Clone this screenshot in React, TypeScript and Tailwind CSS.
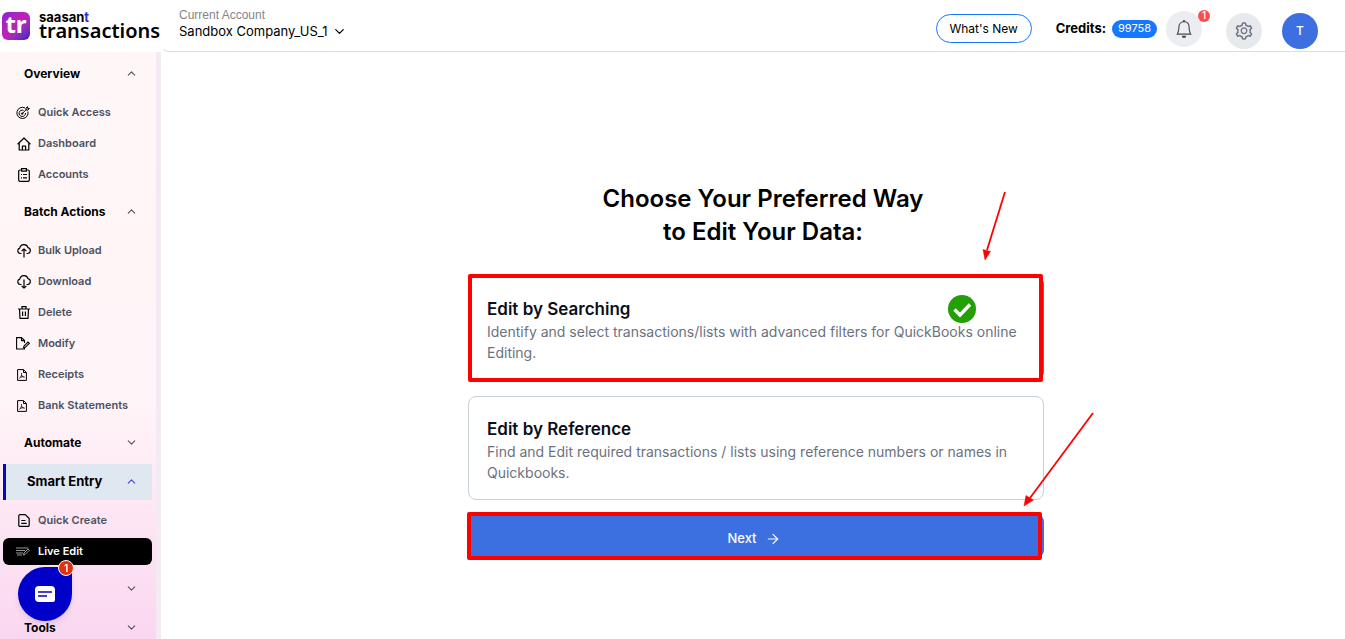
import { useState } from "react";
import type { ReactNode } from "react";
import clsx from "clsx";
import { ArrowRight, ChevronDown, ChevronUp } from "lucide-react";
import { AiOutlineSetting } from "react-icons/ai";
import { BsBell } from "react-icons/bs";

type Item = { label: string; icon: ReactNode };
type Section = { id: string; label: string; open?: boolean; current?: boolean; items?: Item[] };

const SECTIONS: Section[] = [
  {
    id: "overview",
    label: "Overview",
    open: true,
    items: [
      { label: "Quick Access", icon: <TargetIcon /> },
      { label: "Dashboard", icon: <HomeIcon /> },
      { label: "Accounts", icon: <ClipboardIcon /> },
    ],
  },
  {
    id: "batch",
    label: "Batch Actions",
    open: true,
    items: [
      { label: "Bulk Upload", icon: <CloudIcon arrow="M7 14.500V6M4.600 8.200 7 5.800 9.400 8.200" /> },
      { label: "Download", icon: <CloudIcon arrow="M7 5.500V14M4.600 11.800 7 14.200 9.400 11.800" /> },
      { label: "Delete", icon: <TrashIcon /> },
      { label: "Modify", icon: <ModifyIcon /> },
      { label: "Receipts", icon: <PdfIcon /> },
      { label: "Bank Statements", icon: <PdfIcon /> },
    ],
  },
  { id: "automate", label: "Automate" },
  {
    id: "smart",
    label: "Smart Entry",
    open: true,
    current: true,
    items: [
      { label: "Quick Create", icon: <DocumentIcon /> },
      { label: "Live Edit", icon: <LiveEditIcon /> },
    ],
  },
  { id: "more", label: "" },
  { id: "tools", label: "Tools" },
];

export default function App() {
  return (
    <div className="flex h-screen overflow-hidden bg-white font-['Inter','Liberation_Sans',sans-serif] text-black">
      <Sidebar />
      <div className="flex min-w-0 flex-1 flex-col">
        <Header />
        <EditChooser />
      </div>
      <ChatLauncher />
    </div>
  );
}

function Logo() {
  return (
    <a href="#" className="flex h-[52px] shrink-0 items-center gap-[9px] pl-0.5">
      <span className="flex size-7 shrink-0 items-center justify-center rounded-md bg-linear-to-br from-[#8a1fd0] via-[#c41fb4] to-[#3a12c8] pb-1 font-['Noto_Sans',sans-serif] text-2xl leading-6 font-bold text-white">
        tr
      </span>
      <span className="flex flex-col pb-0.5">
        <span className="text-[13px] leading-3 font-bold">
          saasan<span className="text-[#2b2be0]">t</span>
        </span>
        <span className="font-['Noto_Sans',sans-serif] text-xl leading-4 font-semibold">transactions</span>
      </span>
    </a>
  );
}

function Sidebar() {
  const [active, setActive] = useState("Live Edit");

  return (
    <aside className="flex w-[161px] shrink-0 flex-col">
      <Logo />
      <nav className="min-h-0 flex-1 overflow-hidden border-r-5 border-[#f4eaf3] bg-linear-to-b from-[#fff7f7] via-[#fff4f7] via-60% to-[#fad7f0] pt-0.5 pr-1 pl-[3px]">
        {SECTIONS.map((s) => (
          <NavSection key={s.id} section={s} active={active} onSelect={setActive} />
        ))}
      </nav>
    </aside>
  );
}

function NavSection({
  section,
  active,
  onSelect,
}: {
  section: Section;
  active: string;
  onSelect: (label: string) => void;
}) {
  const [open, setOpen] = useState(!!section.open);
  const Chevron = open ? ChevronUp : ChevronDown;

  return (
    <>
      <div className="flex h-[39px] items-center">
        <button
          onClick={() => setOpen(!open)}
          aria-expanded={open}
          aria-label={section.label || "More"}
          className={clsx(
            "flex h-9 w-full items-center justify-between pr-3.5 pl-[21px] font-bold",
            section.current ? "border-l-3 border-[#0a0ab4] bg-[#dfe7f0] text-[13px]" : "text-xs",
          )}
        >
          <span>{section.label}</span>
          <Chevron size={13} className={section.current ? "text-[#4a3fd0]" : "text-zinc-600"} />
        </button>
      </div>
      {open && section.items && (
        <ul className="flex flex-col gap-1 pt-1.5 pb-1">
          {section.items.map((it) => (
            <li key={it.label}>
              <a
                href="#"
                onClick={() => onSelect(it.label)}
                className={clsx(
                  "flex h-[27px] items-center rounded-md pl-3 text-[11px] font-semibold",
                  active === it.label ? "bg-black text-white" : "text-[#4b5160]",
                )}
              >
                <span className={clsx("mr-1.5 flex w-[17px] items-center justify-center", active !== it.label && "text-black")}>
                  {it.icon}
                </span>
                {it.label}
              </a>
            </li>
          ))}
        </ul>
      )}
    </>
  );
}

function Header() {
  return (
    <header className="flex h-[52px] shrink-0 items-center justify-between rounded-bl-lg border-b border-l border-b-[#dcdcdc] border-l-transparent pr-[27px] pl-[17px]">
      <div className="flex flex-col pb-1">
        <span className="font-['Liberation_Sans',sans-serif] text-xs leading-4 text-[#868686]">Current Account</span>
        <button className="flex items-center gap-1 text-[13px] leading-[17px]">
          Sandbox Company_US_1
          <ChevronDown size={15} />
        </button>
      </div>

      <div className="flex items-center pt-1.5">
        <button className="mr-6 h-[29px] w-24 rounded-full border border-[#1677ff] text-xs">What's New</button>
        <span className="mr-1.5 text-[13px] font-bold">Credits:</span>
        <span className="mr-[9px] flex h-[18px] w-[45px] items-center justify-center rounded-full bg-[#1677ff] text-[11px] text-white">
          99758
        </span>
        <button
          aria-label="Notifications"
          className="relative mr-6 flex size-9 items-center justify-center rounded-full bg-[#ebedf2] text-[#4a4a4a]"
        >
          <BsBell size={18} />
          <span className="absolute -top-px -right-2 flex size-3 items-center justify-center rounded-full bg-[#ff4d4f] text-[10px] font-medium text-white">
            1
          </span>
        </button>
        <div className="flex gap-5 pt-1">
          <button
            aria-label="Settings"
            className="flex size-9 items-center justify-center rounded-full bg-[#e7eaed] text-[#6b7280]"
          >
            <AiOutlineSetting size={20} />
          </button>
          <button className="size-9 rounded-full bg-[#3c6fe0] text-xs font-medium text-white">T</button>
        </div>
      </div>
    </header>
  );
}

function EditChooser() {
  return (
    <main className="min-h-0 flex-1 overflow-hidden pt-[130px] pl-1.5">
      <div className="relative mx-auto flex max-w-[576px] flex-col">
        <h1 className="mb-7 pl-3.5 text-center text-2xl leading-[33px] font-semibold">
          Choose Your Preferred Way
          <br />
          to Edit Your Data:
        </h1>

        <div className="flex flex-col gap-4">
          <OptionCard
            selected
            title="Edit by Searching"
            text="Identify and select transactions/lists with advanced filters for QuickBooks online Editing."
          />
          <OptionCard
            title="Edit by Reference"
            text="Find and Edit required transactions / lists using reference numbers or names in Quickbooks."
          />
        </div>

        <div className="relative mt-3.5">
          <button className="flex h-11 w-full items-center justify-center gap-2 rounded-lg bg-[#3c6fe0] pt-1.5 pr-1 text-[13px] font-medium text-white">
            Next
            <ArrowRight size={16} strokeWidth={1.75} />
          </button>
          <Highlight className="-inset-y-0.5 right-0.5 -left-px" />
        </div>

        <Pointers />
      </div>
    </main>
  );
}

function OptionCard({ title, text, selected }: { title: string; text: string; selected?: boolean }) {
  return (
    <button
      className={clsx(
        "relative h-[104px] rounded-lg border pt-1 pr-6 pl-[18px] text-left",
        selected ? "border-[#3c6fe0]" : "border-[#c8d0da]",
      )}
    >
      <span className="block text-[17px] leading-6 font-semibold text-[#0b0f19]">{title}</span>
      <span className="block text-sm leading-[21px] text-[#6b7280]">{text}</span>
      {selected && (
        <>
          <svg viewBox="0 0 28 28" className="absolute top-[18px] right-[67px] size-7">
            <circle cx="14" cy="14" r="14" fill="#22a006" />
            <path d="M6.500 14.500 12 20 22 9.500" fill="none" stroke="#fff" strokeWidth="3.400" />
          </svg>
          <Highlight className="-inset-y-[3px] right-0 -left-px" />
        </>
      )}
    </button>
  );
}

function Highlight({ className }: { className: string }) {
  return <span className={clsx("pointer-events-none absolute rounded-xs border-4 border-[#ff0000]", className)} />;
}

function Pointers() {
  return (
    <svg
      width="640"
      height="380"
      viewBox="0 0 640 380"
      className="pointer-events-none absolute top-0 left-0 max-w-none"
      fill="#ff0000"
      stroke="#ff0000"
    >
      <path d="M537 10 519 68" strokeWidth="1.8" />
      <path d="M517 78 515 67.500 522.500 69.500Z" strokeWidth="0.500" />
      <path d="M625 231 562 316" strokeWidth="1.8" />
      <path d="M556 324 558 313.500 565.500 318Z" strokeWidth="0.500" />
    </svg>
  );
}

function ChatLauncher() {
  return (
    <button
      aria-label="Open chat"
      className="fixed bottom-[18px] left-[18px] flex size-[54px] items-center justify-center rounded-full rounded-tr-none bg-[#0000c8] shadow-md"
    >
      <svg width="20" height="16" viewBox="0 0 20 16">
        <path d="M4 0H16A4 4 0 0 1 20 4V14A2 2 0 0 1 18 16H4A4 4 0 0 1 0 12V4A4 4 0 0 1 4 0Z" fill="#fff" />
        <path d="M3 6H17M3 10H12" stroke="#0000c8" strokeWidth="1.500" />
      </svg>
      <span className="absolute -top-[7px] -right-0.5 flex size-4 items-center justify-center rounded-full border border-white bg-[#e03212] text-[10px] font-semibold text-white">
        1
      </span>
    </button>
  );
}

function TargetIcon() {
  return (
    <svg width="14" height="14" viewBox="0 0 14 14" className="mr-0.5" fill="none" stroke="currentColor" strokeWidth="1">
      <path d="M9 1.900A5.600 5.600 0 1 0 11.900 5.500" />
      <path d="M7.500 4.300A3.200 3.200 0 1 0 9.500 7" />
      <path d="M6.200 7.600 10.200 3.600M10 4V2L11.700.700V2.400L13.400 2.500 12 4Z" />
      <circle cx="6.200" cy="7.600" r="0.800" />
    </svg>
  );
}

function HomeIcon() {
  return (
    <svg width="14" height="14" viewBox="0 0 14 14" fill="none" stroke="currentColor" strokeWidth="1.200" strokeLinejoin="round">
      <path d="M.6 7.200 7 1 13.400 7.200M2.200 5.800V13H11.800V5.800" />
      <path d="M5.400 13V9.200H8.600V13" />
    </svg>
  );
}

function ClipboardIcon() {
  return (
    <svg width="12" height="14" viewBox="0 0 12 14" fill="none" stroke="currentColor" strokeWidth="1.200">
      <path d="M3.500 2H2A1.300 1.300 0 0 0 .7 3.300V12A1.300 1.300 0 0 0 2 13.300H10A1.300 1.300 0 0 0 11.300 12V3.300A1.300 1.300 0 0 0 10 2H8.500" />
      <path d="M3.600.7H8.400V3.200H3.600ZM3 6.500H4M5 6.500H9M3 9.800H4M5 9.800H9" />
    </svg>
  );
}

function CloudIcon({ arrow }: { arrow: string }) {
  return (
    <svg width="14" height="15" viewBox="0 0 14 15" fill="none" stroke="currentColor" strokeWidth="1.200" strokeLinejoin="round">
      <path d="M4.500 10.500H3.300A2.700 2.700 0 0 1 2.800 5.200 4.200 4.200 0 0 1 11 4.600 3 3 0 0 1 10.700 10.500H9.500" />
      <path d={arrow} />
    </svg>
  );
}

function TrashIcon() {
  return (
    <svg width="12" height="13" viewBox="0 0 12 13" fill="none" stroke="currentColor" strokeWidth="1.200">
      <path d="M0 3H12M4 3V.7H8V3M1.500 3 2 12.300H10L10.500 3M4.600 5.500V10M7.400 5.500V10" />
    </svg>
  );
}

function ModifyIcon() {
  return (
    <svg width="14" height="13" viewBox="0 0 14 13" className="mr-0.5" fill="none" stroke="currentColor" strokeWidth="1.1">
      <path d="M8.500 10.500V12H.6V.6H5.500L8.500 3.600V6M5.500.6V3.600H8.500" />
      <path d="M7.500 10.800 8 9 12 5 13.300 6.300 9.300 10.300Z" />
    </svg>
  );
}

function PdfIcon() {
  return (
    <svg width="10" height="12" viewBox="0 0 10 12" className="mr-1" fill="none" stroke="currentColor" strokeWidth="1">
      <path d="M.6.6H6.500L9.400 3.500V11.400H.6ZM6.500.6V3.500H9.400" />
      <path d="M4.500 4V5.500C4.500 7 3.500 8.500 2.400 9.300M4.500 6C5 7.500 6.500 8.200 7.800 8.200M3.300 8.300 6.500 7.600" strokeWidth="0.800" />
    </svg>
  );
}

function DocumentIcon() {
  return (
    <svg width="12" height="13" viewBox="0 0 12 13" fill="none" stroke="currentColor" strokeWidth="1.200" strokeLinejoin="round">
      <path d="M7.300.6H2A1.200 1.200 0 0 0 .8 1.800V11.200A1.200 1.200 0 0 0 2 12.400H10A1.200 1.200 0 0 0 11.200 11.200V4.500Z" />
      <path d="M3.300 6.500H7.500M3.300 9.300H8.700" />
    </svg>
  );
}

function LiveEditIcon() {
  return (
    <svg width="14" height="9" viewBox="0 0 14 9" className="mr-0.5" fill="none" stroke="currentColor" strokeWidth="0.8" opacity="0.75">
      <path d="M0 1H12.500M0 3.500H9M0 6H7M1 8H6" />
      <path d="M7.500 8 8 6 12 2 13.300 3.300 9.300 7.300Z" />
    </svg>
  );
}
